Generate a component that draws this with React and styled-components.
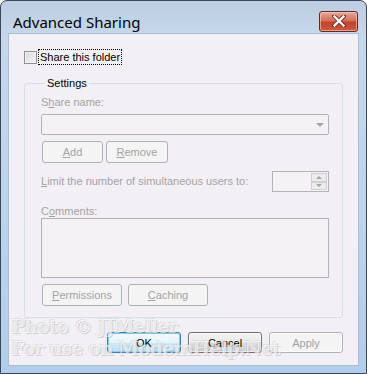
import styled, { createGlobalStyle } from 'styled-components'

const GlobalStyle = createGlobalStyle`
  html, body {
    margin: 0;
    padding: 0;
    background: #ffffff;
  }
  * {
    box-sizing: border-box;
  }
`

const Window = styled.div`
  position: relative;
  width: 367px;
  height: 374px;
  border: 1px solid #3b4658;
  border-radius: 7px 7px 0 0;
  background: linear-gradient(180deg, #bccde2 0%, #c6d8ec 10%, #bcd3ec 60%, #b2cdeb 100%);
  padding: 0 7px 7px 7px;
  display: flex;
  flex-direction: column;
  overflow: hidden;
  font-family: "Liberation Sans", Arial, sans-serif;
  font-size: 11px;
`

const TitleBar = styled.div`
  height: 32px;
  display: flex;
  align-items: center;
  justify-content: space-between;
  padding: 0 1px 0 5px;
`

const Title = styled.span`
  font-family: "Noto Sans", sans-serif;
  font-size: 15px;
  color: #000;
  margin-top: 9px;
`

const CloseButton = styled.div`
  width: 39px;
  height: 21px;
  margin-top: 8px;
  border: 1px solid #5e2a22;
  border-radius: 3px;
  background: linear-gradient(180deg, #e8a999 0%, #d4705a 45%, #c0432a 55%, #d05a3c 100%);
  box-shadow: inset 0 0 0 1px rgba(255, 220, 210, 0.55);
  display: flex;
  align-items: center;
  justify-content: center;
`

const Client = styled.div`
  flex: 1;
  background: #f3f0f5;
  border: 1px solid #a9bdd3;
  display: flex;
  flex-direction: column;
  padding: 0 15px 0 15px;
`

const CheckRow = styled.div`
  display: flex;
  align-items: center;
  margin-top: 15px;
  height: 16px;
`

const CheckBox = styled.span`
  width: 13px;
  height: 13px;
  border: 1px solid #8e8f8f;
  background: linear-gradient(135deg, #d6d6d6 0%, #eeeeee 70%, #f8f8f8 100%);
  box-shadow: inset 0 0 0 1px #f4f4f4;
`

const FocusLabel = styled.span`
  margin-left: 1px;
  padding: 0 1px;
  height: 16px;
  line-height: 14px;
  border: 1px dotted #000;
  color: #000;
`

const Group = styled.fieldset`
  margin: 11px 0 0 0;
  padding: 5px 13px 11px 16px;
  border: 1px solid #d5dfe5;
  border-radius: 3px;
  display: flex;
  flex-direction: column;
  min-width: 0;
`

const Legend = styled.legend`
  padding: 0 2px;
  margin-left: 4px;
  line-height: 14px;
  color: #000;
`

const Label = styled.div`
  color: #a3a3a3;
  line-height: ${({ $lh }) => $lh || 15}px;
  margin-top: ${({ $mt }) => $mt || 0}px;
`

const Combo = styled.div`
  margin-top: 4px;
  height: 21px;
  border: 1px solid #b5b2b5;
  border-radius: 2px;
  background: #f4f2f5;
  display: flex;
  align-items: center;
  justify-content: flex-end;
  padding-right: 4px;
`

const Arrow = styled.span`
  width: 0;
  height: 0;
  border-left: 4px solid transparent;
  border-right: 4px solid transparent;
  border-top: 4px solid #a6a6a6;
`

const ButtonRow = styled.div`
  display: flex;
  gap: ${({ $gap }) => $gap}px;
  margin-top: 6px;
  padding-left: 1px;
`

const DisabledButton = styled.div`
  width: ${({ $w }) => $w}px;
  height: 22px;
  border: 1px solid #adb2b5;
  border-radius: 3px;
  background: #f4f4f4;
  color: #a3a3a3;
  display: flex;
  align-items: center;
  justify-content: center;
`

const U = styled.span`
  text-decoration: underline;
`

const LimitRow = styled.div`
  display: flex;
  align-items: center;
  justify-content: space-between;
  margin-top: 8px;
`

const Spin = styled.div`
  width: 57px;
  height: 21px;
  border: 1px solid #b5b2b5;
  background: #f4f2f5;
  display: flex;
  justify-content: flex-end;
  padding: 1px;
`

const SpinButtons = styled.div`
  width: 16px;
  display: flex;
  flex-direction: column;
`

const SpinButton = styled.div`
  flex: 1;
  border: 1px solid #d0d0d0;
  background: #ececec;
  display: flex;
  align-items: center;
  justify-content: center;
`

const TinyArrow = styled.span`
  width: 0;
  height: 0;
  border-left: 3px solid transparent;
  border-right: 3px solid transparent;
  ${({ $up }) => ($up ? 'border-bottom: 3px solid #a6a6a6;' : 'border-top: 3px solid #a6a6a6;')}
`

const TextArea = styled.div`
  height: 60px;
  border: 1px solid #b5b2b5;
  background: #f4f2f5;
`

const Footer = styled.div`
  display: flex;
  justify-content: flex-end;
  gap: 7px;
  margin-top: 14px;
`

const DialogButton = styled.div`
  width: 74px;
  height: 21px;
  border-radius: 3px;
  display: flex;
  align-items: center;
  justify-content: center;
  color: ${({ $disabled }) => ($disabled ? '#a3a3a3' : '#000')};
  border: 1px solid
    ${({ $default, $disabled }) => ($default ? '#3c7fb1' : $disabled ? '#adb2b5' : '#707070')};
  background: ${({ $default, $disabled }) =>
    $disabled
      ? '#f4f4f4'
      : $default
      ? 'linear-gradient(180deg, #f4fafe 0%, #e6f3fb 50%, #cde9f8 51%, #bddff3 100%)'
      : 'linear-gradient(180deg, #f2f2f2 0%, #ebebeb 50%, #dddddd 51%, #cfcfcf 100%)'};
  box-shadow: ${({ $default }) =>
    $default ? 'inset 0 0 0 1px #7fd1f0' : 'inset 0 0 0 1px rgba(255,255,255,0.7)'};
`

const Watermark = styled.div`
  position: absolute;
  left: 10px;
  top: 314px;
  font-family: "DejaVu Serif", serif;
  font-weight: bold;
  font-size: 19px;
  line-height: 22px;
  letter-spacing: -1px;
  color: rgba(255, 255, 255, 0.6);
  text-shadow: 1px 1px 0 rgba(150, 150, 150, 0.35), -1px -1px 0 rgba(180, 180, 180, 0.3);
  pointer-events: none;
  white-space: nowrap;
`

function CloseIcon() {
  return (
    <svg width="14" height="12" viewBox="0 0 14 12">
      <path d="M2 1 L12 11 M12 1 L2 11" stroke="#6a2a20" strokeWidth="4" strokeLinecap="square" />
      <path d="M2.5 1.5 L11.5 10.5 M11.5 1.5 L2.5 10.5" stroke="#fff" strokeWidth="2.4" strokeLinecap="square" />
    </svg>
  )
}

export default function App() {
  return (
    <>
      <GlobalStyle />
      <Window>
        <TitleBar>
          <Title>Advanced Sharing</Title>
          <CloseButton>
            <CloseIcon />
          </CloseButton>
        </TitleBar>
        <Client>
          <CheckRow>
            <CheckBox />
            <FocusLabel>Share this folder</FocusLabel>
          </CheckRow>
          <Group>
            <Legend>Settings</Legend>
            <Label>
              S<U>h</U>are name:
            </Label>
            <Combo>
              <Arrow />
            </Combo>
            <ButtonRow $gap={3}>
              <DisabledButton $w={61}>
                <U>A</U>dd
              </DisabledButton>
              <DisabledButton $w={62}>
                <U>R</U>emove
              </DisabledButton>
            </ButtonRow>
            <LimitRow>
              <Label>
                <U>L</U>imit the number of simultaneous users to:
              </Label>
              <Spin>
                <SpinButtons>
                  <SpinButton>
                    <TinyArrow $up />
                  </SpinButton>
                  <SpinButton>
                    <TinyArrow />
                  </SpinButton>
                </SpinButtons>
              </Spin>
            </LimitRow>
            <Label $mt={12} $lh={14}>
              C<U>o</U>mments:
            </Label>
            <TextArea />
            <ButtonRow $gap={6}>
              <DisabledButton $w={80}>
                <U>P</U>ermissions
              </DisabledButton>
              <DisabledButton $w={80}>
                <U>C</U>aching
              </DisabledButton>
            </ButtonRow>
          </Group>
          <Footer>
            <DialogButton $default>OK</DialogButton>
            <DialogButton>Cancel</DialogButton>
            <DialogButton $disabled>Apply</DialogButton>
          </Footer>
        </Client>
        <Watermark>
          Photo © JJMeller
          <br />
          For use on ModemHelp.Net
        </Watermark>
      </Window>
    </>
  )
}
